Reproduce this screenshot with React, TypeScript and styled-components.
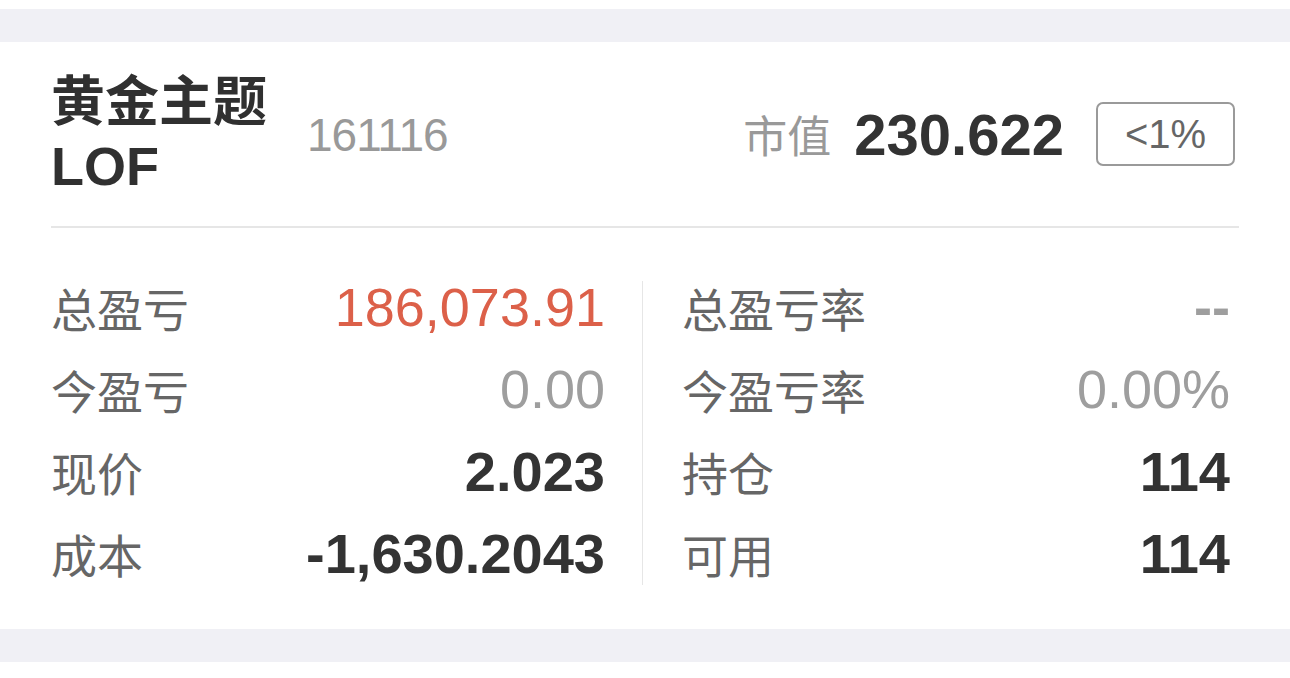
import React from "react";
import styled, { createGlobalStyle } from "styled-components";

const Global = createGlobalStyle`
  html, body { margin: 0; padding: 0; background: #ffffff; }
  body { font-family: "Liberation Sans", "Noto Sans CJK SC", sans-serif; }
`;

const Page = styled.div`
  padding-top: 9px;
  background: #ffffff;
`;

const Band = styled.div`
  height: 33px;
  background: #f0f0f5;
`;

const Card = styled.section`
  background: #ffffff;
  padding: 0 51px;
`;

const Header = styled.div`
  height: 184px;
  display: flex;
  align-items: center;
  border-bottom: 2px solid #e6e6e6;
`;

const TitleGroup = styled.div`
  display: flex;
  align-items: center;
  flex: 1;
`;

const Title = styled.h1`
  margin: 0;
  width: 232px;
  font-size: 54px;
  line-height: 64px;
  font-weight: 700;
  color: #303030;
  font-family: "Liberation Sans", "Noto Sans CJK SC", sans-serif;
`;

const Code = styled.span`
  margin-left: 24px;
  font-size: 46px;
  letter-spacing: -1px;
  color: #999999;
  padding-top: 2px;
`;

const Market = styled.div`
  display: flex;
  align-items: center;
`;

const MarketLabel = styled.span`
  font-size: 44px;
  color: #999999;
  font-family: "Noto Sans CJK SC", sans-serif;
  margin-right: 23px;
`;

const MarketValue = styled.span`
  font-size: 58px;
  font-weight: 700;
  color: #333333;
  margin-right: 32px;
`;

const Badge = styled.span`
  box-sizing: border-box;
  width: 139px;
  height: 64px;
  border: 2px solid #9a9a9a;
  border-radius: 7px;
  display: flex;
  align-items: center;
  justify-content: center;
  font-size: 40px;
  color: #666666;
  margin-right: 4px;
`;

const Body = styled.div`
  display: grid;
  grid-template-columns: 591px 1px 1fr;
  padding: 38px 0 35px;
`;

const Column = styled.div<{ $right?: boolean }>`
  display: flex;
  flex-direction: column;
  padding: ${(p) => (p.$right ? "0 9px 0 39px" : "0 37px 0 0")};
`;

const Divider = styled.div`
  background: #e6e6e6;
  margin: 15px 0 9px;
`;

const Row = styled.div`
  height: 82px;
  display: flex;
  align-items: center;
  justify-content: space-between;
`;

const Label = styled.span`
  font-family: "Noto Sans CJK SC", sans-serif;
  font-size: 46px;
  color: #666666;
`;

type Tone = "red" | "gray" | "dark" | "dash";

const Value = styled.span<{ $tone: Tone }>`
  font-size: ${(p) => (p.$tone === "dark" ? 56 : 54)}px;
  font-weight: ${(p) => (p.$tone === "dark" || p.$tone === "dash" ? 700 : 400)};
  color: ${(p) =>
    p.$tone === "red" ? "#dc6049" : p.$tone === "dark" ? "#333333" : "#9e9e9e"};
`;

type Item = { label: string; value: string; tone: Tone };

const left: Item[] = [
  { label: "总盈亏", value: "186,073.91", tone: "red" },
  { label: "今盈亏", value: "0.00", tone: "gray" },
  { label: "现价", value: "2.023", tone: "dark" },
  { label: "成本", value: "-1,630.2043", tone: "dark" },
];

const right: Item[] = [
  { label: "总盈亏率", value: "--", tone: "dash" },
  { label: "今盈亏率", value: "0.00%", tone: "gray" },
  { label: "持仓", value: "114", tone: "dark" },
  { label: "可用", value: "114", tone: "dark" },
];

export default function App() {
  return (
    <Page>
      <Global />
      <Band />
      <Card>
        <Header>
          <TitleGroup>
            <Title>黄金主题LOF</Title>
            <Code>161116</Code>
          </TitleGroup>
          <Market>
            <MarketLabel>市值</MarketLabel>
            <MarketValue>230.622</MarketValue>
            <Badge>&lt;1%</Badge>
          </Market>
        </Header>
        <Body>
          <Column>
            {left.map((it) => (
              <Row key={it.label}>
                <Label>{it.label}</Label>
                <Value $tone={it.tone}>{it.value}</Value>
              </Row>
            ))}
          </Column>
          <Divider />
          <Column $right>
            {right.map((it) => (
              <Row key={it.label}>
                <Label>{it.label}</Label>
                <Value $tone={it.tone}>{it.value}</Value>
              </Row>
            ))}
          </Column>
        </Body>
      </Card>
      <Band />
    </Page>
  );
}
